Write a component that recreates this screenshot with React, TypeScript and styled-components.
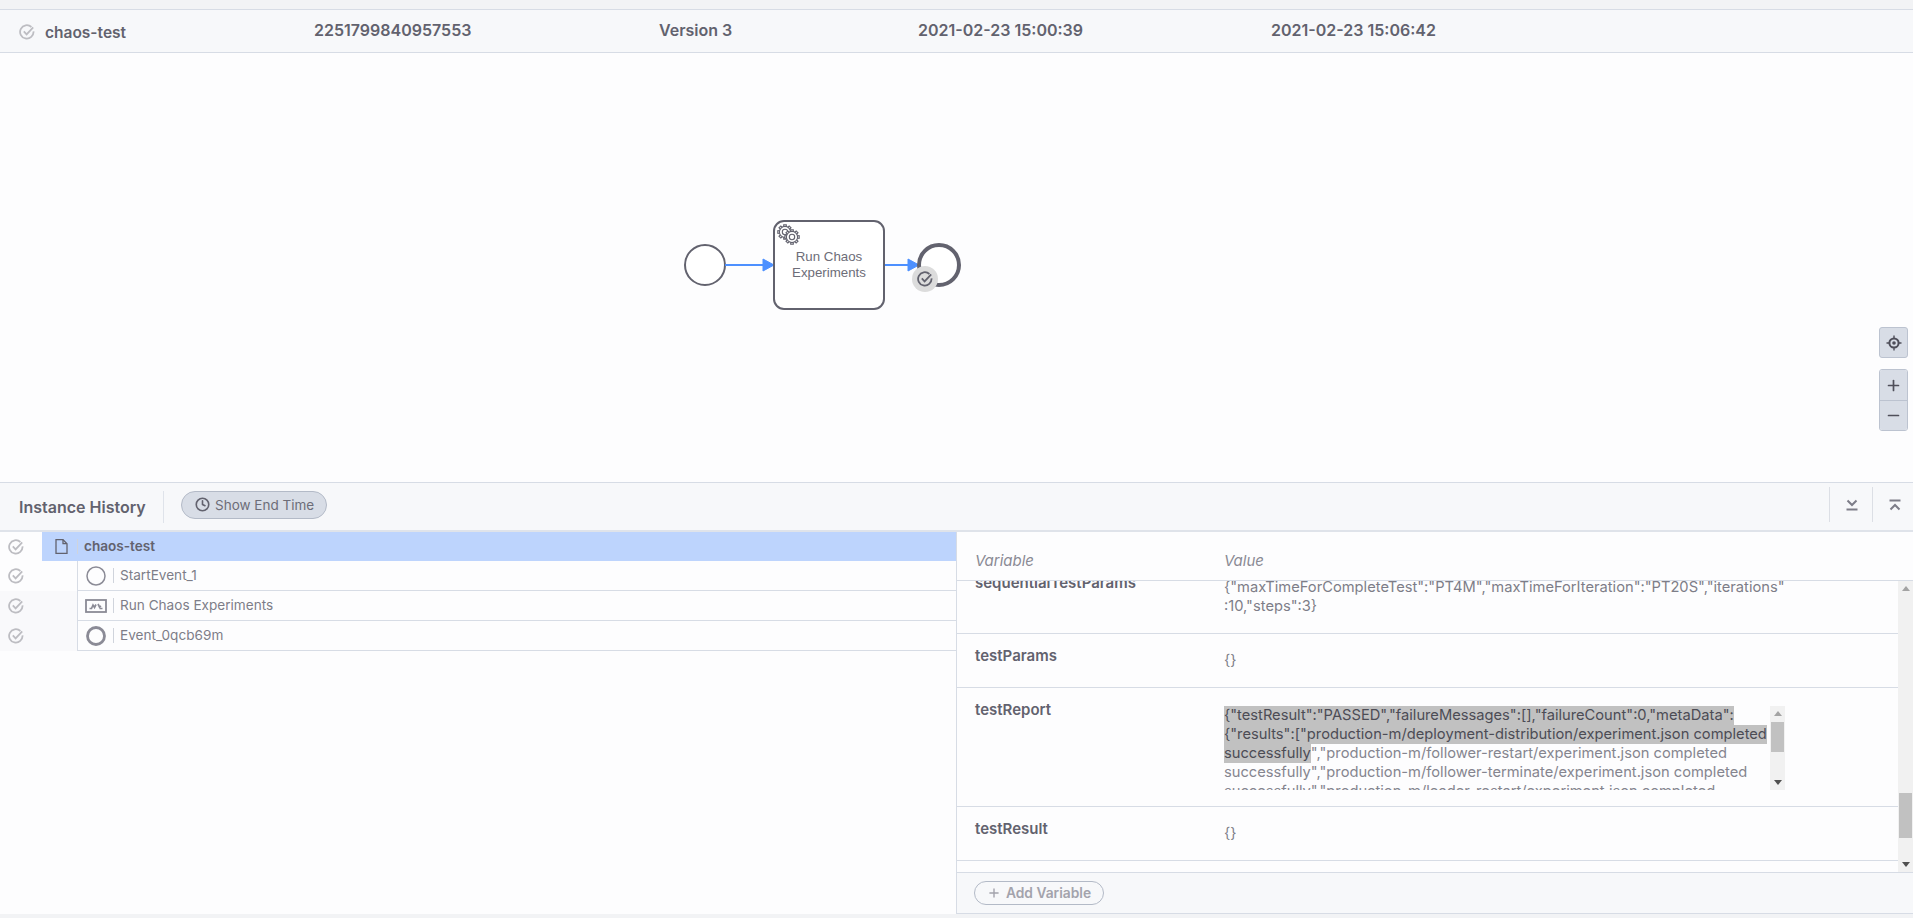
import React from "react";
import styled, { createGlobalStyle } from "styled-components";
import { Clock, Minus, Plus } from "lucide-react";

const GlobalStyle = createGlobalStyle`
  html, body {
    margin: 0;
    padding: 0;
    background: #f2f3f5;
    font-family: Inter, "Noto Sans", sans-serif;
    color: #62626e;
  }
`;

const CheckIcon = ({ size = 16, color = "#bdbdc2" }: { size?: number; color?: string }) => (
  <svg width={size} height={size} viewBox="0 0 16 16" fill="none" stroke={color} strokeWidth="1.8">
    <path d="M12.4 3A6.700 6.700 0 1 0 14.500 7.400" />
    <path d="M4.800 7.400l2.800 3L14.200 3.400" />
  </svg>
);

const FlowNodeIcon = ({ kind }: { kind: "start" | "task" | "end" }) => {
  if (kind === "task") {
    return (
      <svg width="22" height="14" viewBox="0 0 22 14" fill="none" stroke="#8b8b96">
        <rect x="1" y="1" width="20" height="12" strokeWidth="1.8" />
        <path d="M4.500 9.500h2l1.500-3.500 1.500 2.500 1.500-3" strokeWidth="1.700" />
        <path d="M13 5l1.500 3 1.500-1M14.500 9.500h3" strokeWidth="1.700" />
      </svg>
    );
  }
  return (
    <svg width="20" height="20" viewBox="0 0 20 20" fill="none" stroke="#8b8b96">
      <circle cx="10" cy="10" r={kind === "end" ? 8.5 : 9} strokeWidth={kind === "end" ? 2.8 : 1.5} />
    </svg>
  );
};

const GearShape = ({ cx, cy, r }: { cx: number; cy: number; r: number }) => (
  <g fill="#fff" stroke="#62626e" strokeWidth="1.1">
    {[0, 45, 90, 135, 180, 225, 270, 315].map((deg) => (
      <rect key={deg} x={cx - 1.3} y={cy - r - 1.6} width="2.6" height="3" transform={`rotate(${deg} ${cx} ${cy})`} />
    ))}
    <circle cx={cx} cy={cy} r={r} />
    <circle cx={cx} cy={cy} r={r * 0.48} />
  </g>
);

const Diagram = () => (
  <DiagramSvg width="1913" height="429" viewBox="0 53 1913 429">
    <circle cx="705" cy="265" r="20" fill="#fff" stroke="#62626e" strokeWidth="2" />
    <path d="M725 265h40" stroke="#4d90ff" strokeWidth="2" />
    <path d="M763 259l11 6-11 6z" fill="#4d90ff" stroke="#4d90ff" strokeWidth="1" />
    <rect x="774" y="221" width="110" height="88" rx="10" fill="#fff" stroke="#62626e" strokeWidth="2" />
    <GearShape cx={785} cy={232} r={5.6} />
    <GearShape cx={792} cy={237} r={5.6} />
    <NodeLabel x="829" y="261">Run Chaos</NodeLabel>
    <NodeLabel x="829" y="277">Experiments</NodeLabel>
    <path d="M885 265h25" stroke="#4d90ff" strokeWidth="2" />
    <path d="M908 259l11 6-11 6z" fill="#4d90ff" stroke="#4d90ff" strokeWidth="1" />
    <circle cx="939" cy="265" r="20" fill="#fff" stroke="#62626e" strokeWidth="4" />
    <circle cx="925" cy="279" r="13" fill="#dcdcdc" />
    <g transform="translate(917 271)">
      <CheckIcon size={16} color="#62626e" />
    </g>
  </DiagramSvg>
);

const LocateIcon = () => (
  <svg width="16" height="16" viewBox="0 0 16 16" fill="none" stroke="#4f4f5a">
    <circle cx="8" cy="8" r="4.600" strokeWidth="2" />
    <circle cx="8" cy="8" r="1.800" fill="#4f4f5a" stroke="none" />
    <path d="M8 0.500v3M8 12.500v3M0.500 8h3M12.500 8h3" strokeWidth="1.400" />
  </svg>
);

const ExpandIcon = ({ up }: { up?: boolean }) => (
  <svg width="14" height="12" viewBox="0 0 14 12" fill="none" stroke="#7d7d88" strokeWidth="2">
    {up ? (
      <>
        <path d="M1.500 1.500h11" />
        <path d="M2.500 10.500L7 6l4.500 4.500" />
      </>
    ) : (
      <>
        <path d="M2.500 1.500L7 6l4.500-4.500" />
        <path d="M1.500 10.500h11" />
      </>
    )}
  </svg>
);

const children = [
  { label: "StartEvent_1", kind: "start" as const },
  { label: "Run Chaos Experiments", kind: "task" as const },
  { label: "Event_0qcb69m", kind: "end" as const },
];

const App = () => (
  <Page>
    <GlobalStyle />
    <TopStrip />
    <InstanceHeader>
      <InstanceName>
        <CheckIcon />
        chaos-test
      </InstanceName>
      <HeaderCell>2251799840957553</HeaderCell>
      <HeaderCell>Version 3</HeaderCell>
      <HeaderCell>2021-02-23 15:00:39</HeaderCell>
      <HeaderCell>2021-02-23 15:06:42</HeaderCell>
    </InstanceHeader>

    <DiagramArea>
      <Diagram />
      <ZoomControls>
        <ZoomButton $single>
          <LocateIcon />
        </ZoomButton>
        <ZoomGroup>
          <ZoomButton>
            <Plus size={17} strokeWidth={2.4} />
          </ZoomButton>
          <ZoomButton $divided>
            <Minus size={17} strokeWidth={2.4} />
          </ZoomButton>
        </ZoomGroup>
      </ZoomControls>
    </DiagramArea>

    <PanelHeader>
      <PanelTitle>Instance History</PanelTitle>
      <PanelDivider />
      <EndTimeButton>
        <Clock size={15} strokeWidth={2.6} color="#62626e" />
        Show End Time
      </EndTimeButton>
      <PanelActions>
        <PanelAction $width={43}>
          <ExpandIcon />
        </PanelAction>
        <PanelAction $width={41}>
          <ExpandIcon up />
        </PanelAction>
      </PanelActions>
    </PanelHeader>

    <PanelBody>
      <Tree>
        <TreeRow>
          <StatusCell $width={42}>
            <CheckIcon />
          </StatusCell>
          <RootNode>
            <RootIcon>
              <svg width="13" height="15" viewBox="0 0 13 15" fill="none" stroke="#62626e" strokeWidth="1.3">
                <path d="M1 .7h7l4 4v9.600H1z" />
                <path d="M8 .7v4h4" />
              </svg>
            </RootIcon>
            <NodeText $bold>chaos-test</NodeText>
          </RootNode>
        </TreeRow>
        {children.map((item, i) => (
          <TreeRow key={item.label}>
            <StatusCell $width={77} $shaded={i > 0}>
              <CheckIcon />
            </StatusCell>
            <ChildNode>
              <ChildIcon>
                <FlowNodeIcon kind={item.kind} />
              </ChildIcon>
              <NodeText>{item.label}</NodeText>
            </ChildNode>
          </TreeRow>
        ))}
      </Tree>

      <Variables>
        <VariablesHead>
          <span>Variable</span>
          <span>Value</span>
        </VariablesHead>
        <VariablesScroll>
          <VariableList>
            <VariableRow $clipped>
              <VariableName>sequentialTestParams</VariableName>
              <VariableValue>
                <ValueLine>{'{"maxTimeForCompleteTest":"PT4M","maxTimeForIteration":"PT20S","iterations"'}</ValueLine>
                <ValueLine>{':10,"steps":3}'}</ValueLine>
              </VariableValue>
            </VariableRow>
            <VariableRow>
              <VariableName>testParams</VariableName>
              <VariableValue>{"{}"}</VariableValue>
            </VariableRow>
            <VariableRow>
              <VariableName>testReport</VariableName>
              <ReportBox>
                <ReportText>
                  <ValueLine>
                    <Selected>{'{"testResult":"PASSED","failureMessages":[],"failureCount":0,"metaData":'}</Selected>
                  </ValueLine>
                  <ValueLine>
                    <Selected>{'{"results":["production-m/deployment-distribution/experiment.json completed'}</Selected>
                  </ValueLine>
                  <ValueLine>
                    <Selected>successfully</Selected>
                    {'","production-m/follower-restart/experiment.json completed'}
                  </ValueLine>
                  <ValueLine>{'successfully","production-m/follower-terminate/experiment.json completed'}</ValueLine>
                  <ValueLine>{'successfully","production-m/leader-restart/experiment.json completed'}</ValueLine>
                </ReportText>
                <ScrollBar>
                  <ScrollArrow $up />
                  <ScrollTrack>
                    <ScrollThumb $offset={1} $height={30} />
                  </ScrollTrack>
                  <ScrollArrow />
                </ScrollBar>
              </ReportBox>
            </VariableRow>
            <VariableRow>
              <VariableName>testResult</VariableName>
              <VariableValue>{"{}"}</VariableValue>
            </VariableRow>
          </VariableList>
          <ScrollBar>
            <ScrollArrow $up />
            <ScrollTrack>
              <ScrollThumb $offset={197} $height={45} />
            </ScrollTrack>
            <ScrollArrow />
          </ScrollBar>
        </VariablesScroll>
        <VariablesFooter>
          <AddButton>
            <Plus size={14} strokeWidth={2.4} />
            Add Variable
          </AddButton>
        </VariablesFooter>
      </Variables>
    </PanelBody>
    <BottomStrip />
  </Page>
);

export default App;

const Page = styled.div`
  display: flex;
  flex-direction: column;
  width: 1913px;
  height: 918px;
  overflow: hidden;
  background: #fdfdfe;
`;

const TopStrip = styled.div`
  flex: none;
  height: 9px;
  background: #f2f3f5;
`;

const InstanceHeader = styled.div`
  flex: none;
  display: grid;
  grid-template-columns: 314px 345px 259px 353px 1fr;
  height: 42px;
  box-sizing: content-box;
  background: #f7f8fa;
  border-top: 1px solid #d7dce5;
  border-bottom: 1px solid #d7dce5;
  font-size: 16px;
  font-weight: 600;
`;

const HeaderCell = styled.div`
  padding-top: 10px;
  line-height: 20px;
`;

const InstanceName = styled.div`
  display: flex;
  align-items: center;
  gap: 10px;
  padding: 2px 0 0 19px;
  font-size: 15.5px;
`;

const DiagramArea = styled.div`
  position: relative;
  flex: none;
  height: 429px;
  background: #fdfdfe;
`;

const DiagramSvg = styled.svg`
  display: block;
`;

const NodeLabel = styled.text`
  font-family: "Liberation Sans", Arial, sans-serif;
  font-size: 13.3px;
  fill: #6d6d78;
  text-anchor: middle;
`;

const ZoomControls = styled.div`
  position: absolute;
  top: 274px;
  right: 5px;
  display: flex;
  flex-direction: column;
  gap: 11px;
`;

const ZoomGroup = styled.div`
  display: flex;
  flex-direction: column;
  border: 1px solid #bcc3d0;
  border-radius: 3px;
  overflow: hidden;
`;

const ZoomButton = styled.div<{ $single?: boolean; $divided?: boolean }>`
  display: flex;
  align-items: center;
  justify-content: center;
  box-sizing: border-box;
  width: ${(p) => (p.$single ? "29px" : "27px")};
  height: ${(p) => (p.$single ? "31px" : "30px")};
  background: #d8dde6;
  color: #4f4f5a;
  border: ${(p) => (p.$single ? "1px solid #bcc3d0" : "none")};
  border-top: ${(p) => (p.$divided || p.$single ? "1px solid #bcc3d0" : "none")};
  border-radius: ${(p) => (p.$single ? "3px" : "0")};
`;

const PanelHeader = styled.div`
  flex: none;
  display: flex;
  align-items: center;
  box-sizing: border-box;
  height: 50px;
  padding-left: 19px;
  background: #f7f8fa;
  border-top: 1px solid #d7dce5;
  border-bottom: 2px solid #dfe3ea;
`;

const PanelTitle = styled.div`
  width: 144px;
  font-size: 16px;
  font-weight: 600;
`;

const PanelDivider = styled.div`
  width: 1px;
  height: 32px;
  background: #dfe3ea;
`;

const EndTimeButton = styled.div`
  display: flex;
  align-items: center;
  gap: 5px;
  box-sizing: border-box;
  height: 28px;
  width: 146px;
  margin: -4px 0 0 17px;
  padding-left: 13px;
  border: 1px solid #b3bac7;
  border-radius: 14px;
  background: #d8dde6;
  font-size: 13.5px;
  color: #6d6d78;
`;

const PanelActions = styled.div`
  display: flex;
  margin-left: auto;
`;

const PanelAction = styled.div<{ $width: number }>`
  display: flex;
  align-items: center;
  box-sizing: border-box;
  width: ${(p) => p.$width}px;
  height: 35px;
  margin-top: -4px;
  padding-left: 15px;
  border-left: 1px solid #dcdfe5;
`;

const PanelBody = styled.div`
  flex: 1;
  display: flex;
  min-height: 0;
`;

const Tree = styled.div`
  width: 956px;
  flex: none;
`;

const TreeRow = styled.div`
  display: flex;
  height: 30px;
  &:first-child {
    height: 29px;
  }
`;

const StatusCell = styled.div<{ $width: number; $shaded?: boolean }>`
  flex: none;
  display: flex;
  align-items: center;
  box-sizing: border-box;
  width: ${(p) => p.$width}px;
  padding-left: 8px;
  background: ${(p) => (p.$shaded ? "#f9f9fb" : "#fdfdfe")};
`;

const RootNode = styled.div`
  flex: 1;
  display: flex;
  align-items: center;
  background: #bdd4fd;
`;

const RootIcon = styled.div`
  display: flex;
  justify-content: center;
  box-sizing: border-box;
  width: 35px;
  padding-left: 3px;
`;

const ChildNode = styled.div`
  flex: 1;
  display: flex;
  align-items: center;
  background: #fdfdfe;
  border-left: 1px solid #d7dce5;
  border-bottom: 1px solid #d7dce5;
`;

const ChildIcon = styled.div`
  display: flex;
  justify-content: center;
  width: 35px;
`;

const NodeText = styled.div<{ $bold?: boolean }>`
  padding: 0 0 1px 6px;
  line-height: 14px;
  border-left: 1px solid #d0d4dc;
  font-size: 13.6px;
  font-weight: ${(p) => (p.$bold ? 600 : 400)};
  color: ${(p) => (p.$bold ? "#62626e" : "#7d7d88")};
`;

const Variables = styled.div`
  flex: 1;
  display: flex;
  flex-direction: column;
  min-width: 0;
  border-left: 1px solid #d7dce5;
`;

const VariablesHead = styled.div`
  flex: none;
  display: grid;
  grid-template-columns: 249px 1fr;
  align-items: end;
  box-sizing: border-box;
  height: 49px;
  padding: 0 0 10px 18px;
  background: #fdfdfe;
  border-bottom: 1px solid #d7dce5;
  font-size: 15px;
  font-style: italic;
  color: #8a8a94;
`;

const VariablesScroll = styled.div`
  flex: none;
  display: flex;
  height: 291px;
  overflow: hidden;
  background: #fdfdfe;
`;

const VariableList = styled.div`
  flex: 1;
  min-width: 0;
`;

const VariableRow = styled.div<{ $clipped?: boolean }>`
  display: grid;
  grid-template-columns: 249px 1fr;
  padding-left: 18px;
  margin-top: ${(p) => (p.$clipped ? "-20px" : "0")};
  border-bottom: 1px solid #d7dce5;
`;

const VariableName = styled.div`
  padding-top: 12px;
  line-height: 20px;
  font-size: 15px;
  font-weight: 600;
`;

const VariableValue = styled.div`
  padding: 17px 0;
  line-height: 19px;
  font-size: 14.7px;
  color: #7d7d88;
`;

const ValueLine = styled.div`
  height: 19px;
  line-height: 19px;
  white-space: nowrap;
`;

const ReportBox = styled.div`
  display: flex;
  width: 561px;
  height: 84px;
  margin: 18px 0 16px;
  overflow: hidden;
`;

const ReportText = styled.div`
  width: 546px;
  font-size: 14.7px;
  color: #85858f;
`;

const Selected = styled.span`
  display: inline-block;
  background: #c1c1c1;
  color: #4c4c55;
`;

const ScrollBar = styled.div`
  flex: none;
  display: flex;
  flex-direction: column;
  width: 15px;
  background: #f1f1f1;
`;

const ScrollArrow = styled.div<{ $up?: boolean }>`
  flex: none;
  display: flex;
  align-items: center;
  justify-content: center;
  height: 15px;
  &::after {
    content: "";
    border-left: 4px solid transparent;
    border-right: 4px solid transparent;
    ${(p) => (p.$up ? "border-bottom: 5px solid #a3a3a3;" : "border-top: 5px solid #505050;")}
  }
`;

const ScrollTrack = styled.div`
  flex: 1;
  min-height: 0;
  overflow: hidden;
`;

const ScrollThumb = styled.div<{ $offset: number; $height: number }>`
  height: ${(p) => p.$height}px;
  margin: ${(p) => p.$offset}px 1px 0;
  background: #c1c1c1;
`;

const VariablesFooter = styled.div`
  flex: none;
  display: flex;
  align-items: center;
  box-sizing: border-box;
  height: 42px;
  padding-left: 17px;
  background: #f7f8fa;
  border-top: 1px solid #d7dce5;
  border-bottom: 1px solid #d7dce5;
`;

const AddButton = styled.div`
  display: flex;
  align-items: center;
  justify-content: center;
  gap: 5px;
  box-sizing: border-box;
  width: 130px;
  height: 24px;
  border: 1px solid #b3bac7;
  border-radius: 12px;
  font-size: 13.8px;
  font-weight: 600;
  color: #a3a3ac;
`;

const BottomStrip = styled.div`
  flex: none;
  height: 4px;
  background: #f2f3f5;
`;
